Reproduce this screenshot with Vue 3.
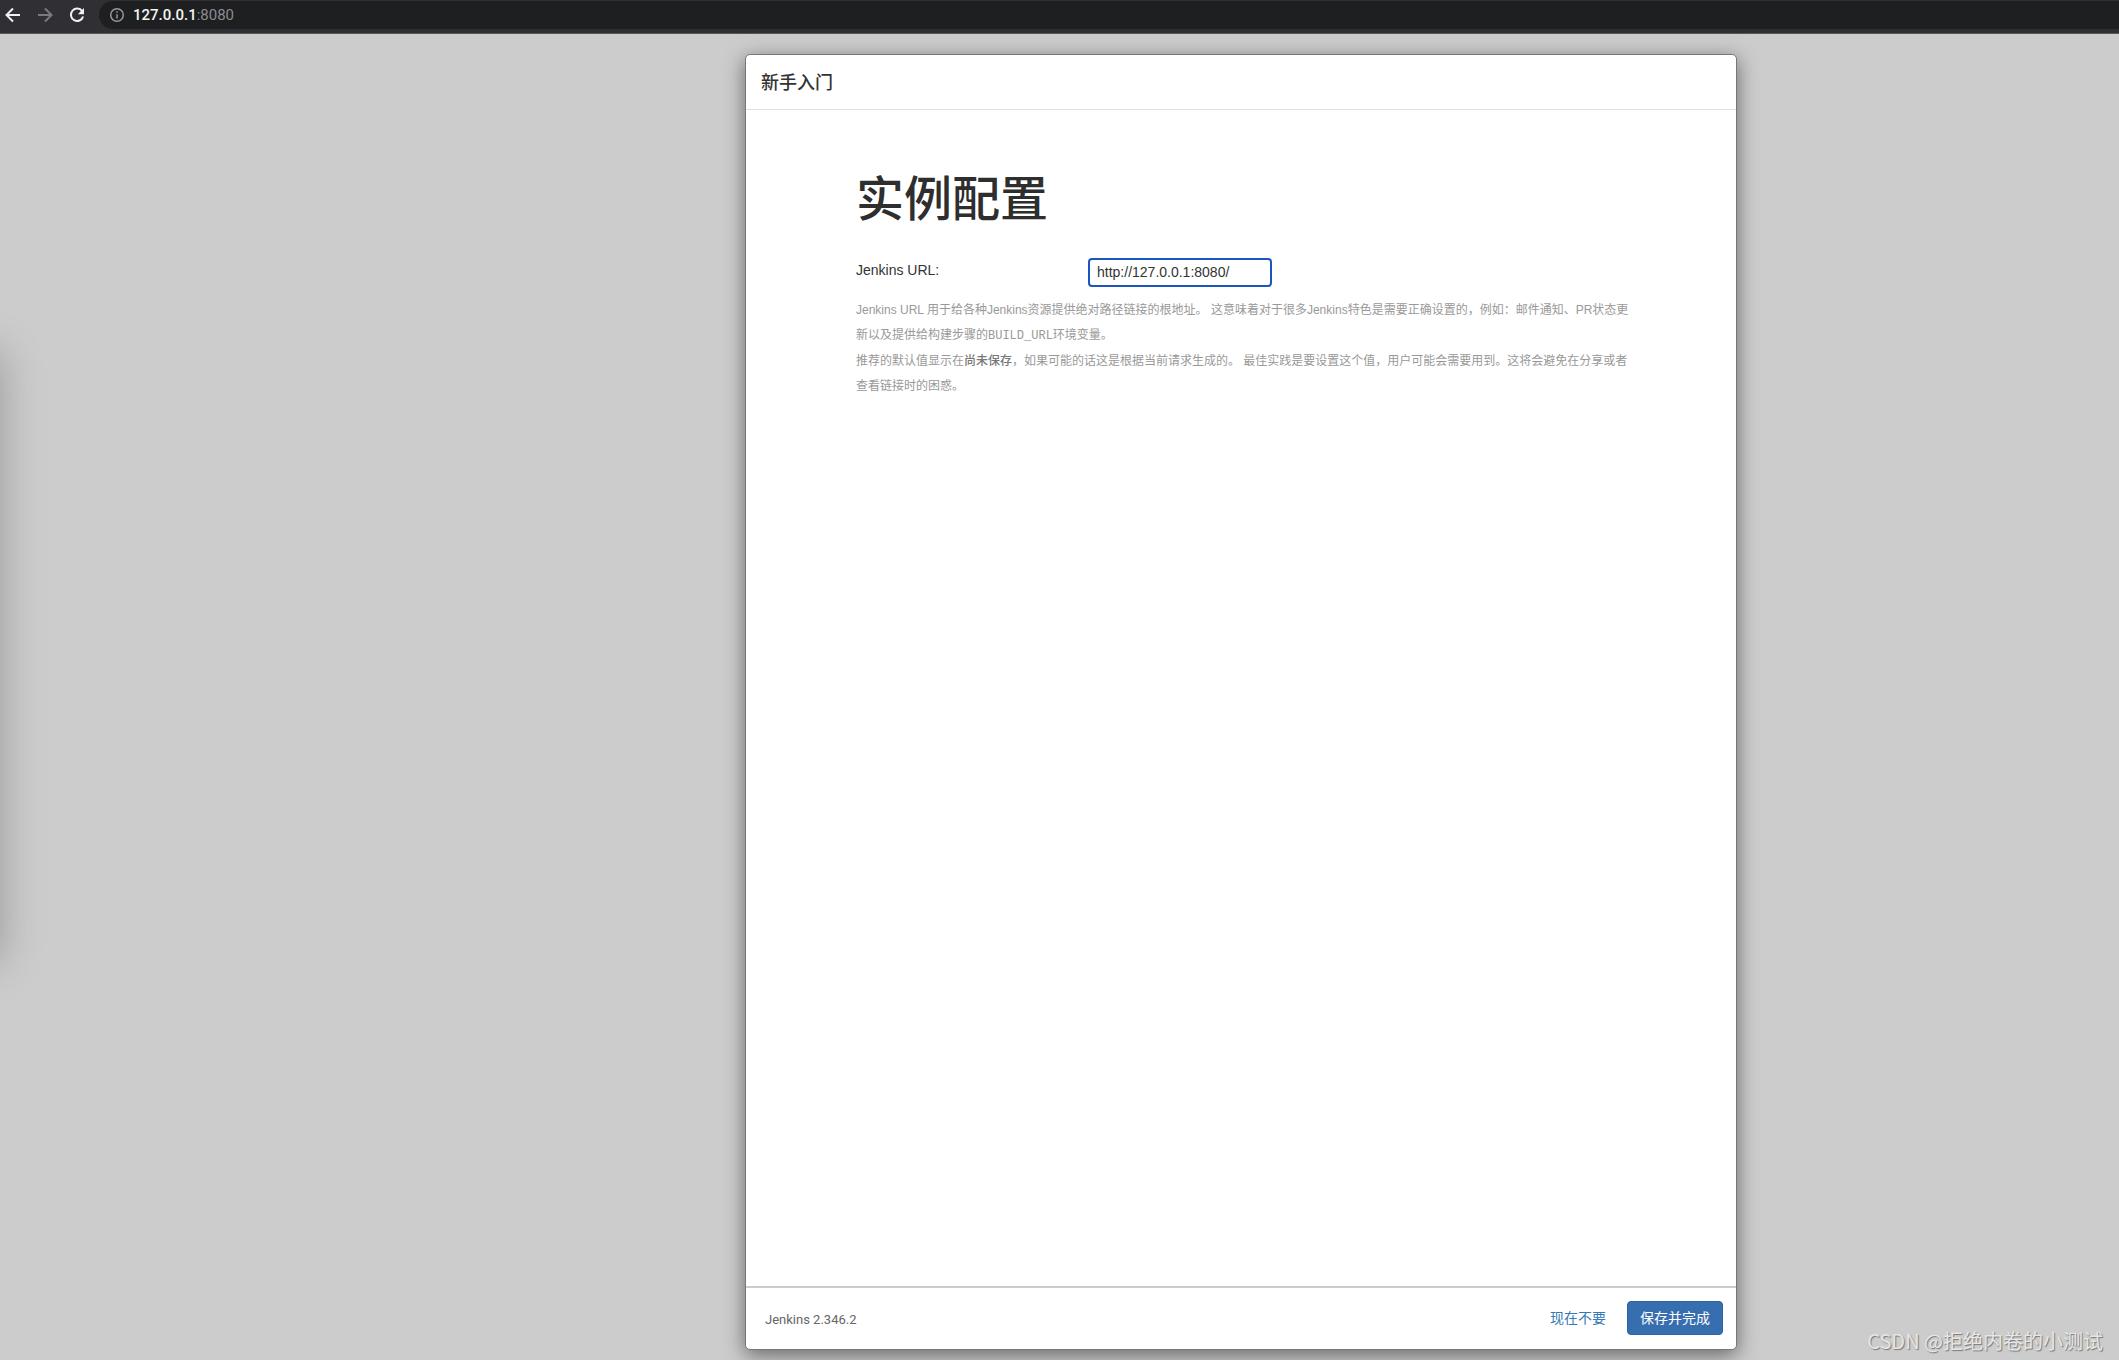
<script setup>
import { ref } from 'vue'

const address = ref('127.0.0.1:8080')
const rootUrl = ref('http://127.0.0.1:8080/')
</script>

<template>
  <div class="browser">
    <header class="toolbar">
      <button class="nav" type="button" aria-label="后退">
        <svg viewBox="0 0 16 16"><path d="M15 8H2M8 1.5 1.5 8 8 14.5" /></svg>
      </button>
      <button class="nav dim" type="button" aria-label="前进">
        <svg viewBox="0 0 16 16"><path d="M1 8h13M8 1.5 14.5 8 8 14.5" /></svg>
      </button>
      <button class="nav" type="button" aria-label="重新加载">
        <svg viewBox="0 0 16 16"><path d="M13.2 4.2A6.2 6.2 0 1 0 14.1 9.5" /><path class="solid" d="M15 1v6.2H8.8z" /></svg>
      </button>
      <div class="address">
        <svg class="info" viewBox="0 0 16 16"><circle cx="8" cy="8" r="6.3" /><path d="M8 7.2v4.3M8 4.2v1.6" /></svg>
        <a class="url" :href="'http://' + address"><b>127.0.0.1</b>:8080</a>
      </div>
    </header>

    <main class="page">
      <div class="window-shade"></div>
      <form class="modal" @submit.prevent>
        <header class="modal-head"><h4>新手入门</h4></header>
        <section class="modal-body">
          <h1>实例配置</h1>
          <div class="field">
            <label for="root-url">Jenkins URL:</label>
            <input id="root-url" v-model="rootUrl" type="text" />
          </div>
          <div class="help">
            <p>Jenkins URL 用于给各种Jenkins资源提供绝对路径链接的根地址。 这意味着对于很多Jenkins特色是需要正确设置的，例如：邮件通知、PR状态更新以及提供给构建步骤的<code>BUILD_URL</code>环境变量。</p>
            <p>推荐的默认值显示在<strong>尚未保存</strong>，如果可能的话这是根据当前请求生成的。 最佳实践是要设置这个值，用户可能会需要用到。这将会避免在分享或者查看链接时的困惑。</p>
          </div>
        </section>
        <footer class="modal-foot">
          <span class="version">Jenkins 2.346.2</span>
          <button class="btn link" type="button">现在不要</button>
          <button class="btn primary" type="submit">保存并完成</button>
        </footer>
      </form>
      <div class="watermark">CSDN @拒绝内卷的小测试</div>
    </main>
  </div>
</template>

<style>
body {
  margin: 0;
}
</style>

<style scoped>
.browser {
  display: flex;
  flex-direction: column;
  min-height: 100vh;
  font-family: "Liberation Sans", "Noto Sans CJK SC", sans-serif;
  color: #333;
}
.toolbar {
  display: flex;
  box-sizing: border-box;
  height: 34px;
  padding: 1px 0 4px 5px;
  background: #302f34;
  border-bottom: 1px solid #5a535e;
}
.nav {
  display: flex;
  align-items: center;
  width: 16px;
  margin-right: 16px;
  padding: 0;
  border: 0;
  background: none;
  color: #f1f1f2;
}
.nav.dim {
  color: #7b7a7e;
}
.nav svg,
.info {
  width: 16px;
  height: 16px;
  fill: none;
  stroke: currentColor;
  stroke-width: 2;
}
.nav .solid {
  fill: currentColor;
  stroke: none;
}
.address {
  display: flex;
  flex: 1;
  align-items: center;
  gap: 8px;
  margin-left: -2px;
  padding-left: 10px;
  border-radius: 14px 0 0 14px;
  background: #1e1f21;
  color: #96989c;
}
.address .info {
  stroke-width: 1.5;
}
.url {
  color: #8b8d90;
  font: 15px/20px Roboto, sans-serif;
  text-decoration: none;
}
.url b {
  color: #f4f4f4;
  font-weight: 500;
}
.page {
  position: relative;
  display: grid;
  flex: 1;
  grid-template-columns: 745fr 992px 382fr;
  padding: 20px 0 10px;
  overflow: hidden;
  background: #ccc;
}
.window-shade {
  position: absolute;
  top: 24%;
  right: 100%;
  bottom: 30%;
  width: 200px;
  box-shadow: 0 0 40px rgba(0, 0, 0, 0.25);
}
.modal {
  display: flex;
  grid-column: 2;
  flex-direction: column;
  border: 1px solid #777;
  border-radius: 5px;
  background: #fff;
  box-shadow: 0 5px 20px rgba(0, 0, 0, 0.5);
}
.modal-head {
  padding: 15px 15px 13px;
  border-bottom: 1px solid #e0e0e0;
}
h4 {
  margin: 0;
  font-size: 18px;
  font-weight: 500;
  line-height: 26px;
}
.modal-body {
  flex: 1;
  padding: 57px 100px 0 110px;
}
h1 {
  margin: 0 0 25px;
  font-size: 48px;
  font-weight: 500;
  line-height: 66px;
  color: #2e2e2e;
}
.field {
  display: flex;
  align-items: flex-start;
}
.field label {
  width: 232px;
  font-size: 14px;
  line-height: 24px;
}
.field input {
  box-sizing: border-box;
  width: 184px;
  height: 29px;
  padding: 0 7px 2px;
  border: 2px solid #1a56bd;
  border-radius: 4px;
  outline: 0;
  color: #333;
  font: 14px "Liberation Sans", sans-serif;
}
.help {
  margin-top: 11px;
  color: #999;
  font-size: 12px;
  line-height: 25px;
}
.help p {
  margin: 0 0 1px;
}
.help strong {
  color: #777;
  font-weight: 500;
}
.help code {
  font: 12px "Liberation Mono", monospace;
}
.modal-foot {
  display: flex;
  align-items: center;
  padding: 13px 13px 14px 19px;
  border-top: 2px solid #ccc;
}
.version {
  margin-right: auto;
  padding-top: 3px;
  color: #666;
  font: 13px/20px Roboto, sans-serif;
}
.btn {
  box-sizing: border-box;
  height: 34px;
  padding: 0 12px 2px;
  border: 1px solid transparent;
  border-radius: 4px;
  background: none;
  font: 14px/20px "Noto Sans CJK SC", sans-serif;
}
.btn.link {
  margin-right: 8px;
  color: #337ab7;
}
.btn.primary {
  border-color: #2f62a0;
  background: #376eb0;
  color: #fff;
}
.watermark {
  position: absolute;
  right: 16px;
  bottom: 5px;
  color: #e6e6e6;
  font: 20px/28px "Noto Sans CJK SC", sans-serif;
  text-shadow: 1px 1px 1px #777;
}
</style>
